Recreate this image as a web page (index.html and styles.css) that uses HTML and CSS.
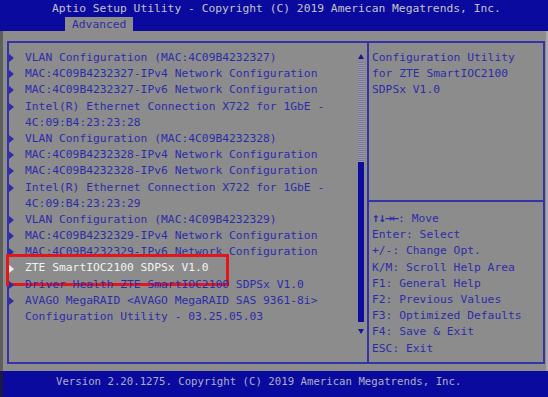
FILE: index.html
```html
<!DOCTYPE html>
<html lang="en">
  <head>
    <meta charset="UTF-8" />
    <meta name="viewport" content="width=device-width, initial-scale=1.0" />
    <title>Aptio Setup Utility</title>
    <link rel="stylesheet" href="styles.css">
  </head>
  <body>
    <div class="screen">
      <header class="top">
        <div class="title">Aptio Setup Utility - Copyright (C) 2019 American Megatrends, Inc.</div>
        <div class="tabs"><span class="tab">Advanced</span></div>
      </header>

      <main class="body">
        <div class="frame">
          <div class="menu-pane">
            <ul class="menu">
              <li class="item"><span class="arrow"></span>VLAN Configuration (MAC:4C09B4232327)</li>
              <li class="item"><span class="arrow"></span>MAC:4C09B4232327-IPv4 Network Configuration</li>
              <li class="item"><span class="arrow"></span>MAC:4C09B4232327-IPv6 Network Configuration</li>
              <li class="item"><span class="arrow"></span>Intel(R) Ethernet Connection X722 for 1GbE -</li>
              <li class="item cont">4C:09:B4:23:23:28</li>
              <li class="item"><span class="arrow"></span>VLAN Configuration (MAC:4C09B4232328)</li>
              <li class="item"><span class="arrow"></span>MAC:4C09B4232328-IPv4 Network Configuration</li>
              <li class="item"><span class="arrow"></span>MAC:4C09B4232328-IPv6 Network Configuration</li>
              <li class="item"><span class="arrow"></span>Intel(R) Ethernet Connection X722 for 1GbE -</li>
              <li class="item cont">4C:09:B4:23:23:29</li>
              <li class="item"><span class="arrow"></span>VLAN Configuration (MAC:4C09B4232329)</li>
              <li class="item"><span class="arrow"></span>MAC:4C09B4232329-IPv4 Network Configuration</li>
              <li class="item"><span class="arrow"></span>MAC:4C09B4232329-IPv6 Network Configuration</li>
              <li class="item selected"><span class="arrow"></span>ZTE SmartIOC2100 SDPSx V1.0</li>
              <li class="item"><span class="arrow"></span>Driver Health ZTE SmartIOC2100 SDPSx V1.0</li>
              <li class="item"><span class="arrow"></span>AVAGO MegaRAID &lt;AVAGO MegaRAID SAS 9361-8i&gt;</li>
              <li class="item cont">Configuration Utility - 03.25.05.03</li>
            </ul>
            <div class="scrollbar">
              <span class="sb-up"></span>
              <span class="sb-track"></span>
              <span class="sb-thumb"></span>
              <span class="sb-down"></span>
            </div>
          </div>

          <div class="help-pane">
            <div class="help-desc">
              <div>Configuration Utility</div>
              <div>for ZTE SmartIOC2100</div>
              <div>SDPSx V1.0</div>
            </div>
            <div class="help-keys">
              <div><b>&uarr;&darr;&rarr;&larr;</b>: Move</div>
              <div>Enter: Select</div>
              <div>+/-: Change Opt.</div>
              <div>K/M: Scroll Help Area</div>
              <div>F1: General Help</div>
              <div>F2: Previous Values</div>
              <div>F3: Optimized Defaults</div>
              <div>F4: Save &amp; Exit</div>
              <div>ESC: Exit</div>
            </div>
          </div>
        </div>
      </main>

      <footer class="bottom">Version 2.20.1275. Copyright (C) 2019 American Megatrends, Inc.</footer>
    </div>
  </body>
</html>
```

FILE: styles.css
```css
/* Basic Reset */
* {
  margin: 0;
  padding: 0;
  box-sizing: border-box;
}

body {
  background-color: #8c8c8c;
  font-family: "DejaVu Sans Mono", "Liberation Mono", monospace;
  font-size: 11.3px;
  color: #2c2caa;
}

.screen {
  width: 548px;
  height: 397px;
  display: flex;
  flex-direction: column;
  overflow: hidden;
}

/* Top bar */
.top {
  height: 31px;
  background-color: #0a0a9e;
  display: flex;
  flex-direction: column;
}

.title {
  height: 17px;
  line-height: 17px;
  padding-left: 52px;
  color: #c4c4cc;
  white-space: nowrap;
}

.tabs {
  height: 14px;
  padding-left: 65px;
}

.tab {
  display: inline-block;
  height: 14px;
  line-height: 15px;
  padding: 0 7px;
  background-color: #8c8c8c;
  color: #2c2caa;
}

/* Main area */
.body {
  flex: 1;
  padding: 10px 1px 7px 4px;
  border-left: 3px solid #5e5e5e;
  border-right: 2px solid #a8a8a8;
}

.frame {
  height: 100%;
  border: 2px solid #3434aa;
  display: flex;
}

.menu-pane {
  width: 360px;
  border-right: 2px solid #3434aa;
  display: flex;
}

.menu {
  flex: 1;
  list-style: none;
  padding-top: 7px;
}

.item {
  position: relative;
  display: flex;
  align-items: center;
  height: 16.2px;
  line-height: 16.2px;
  white-space: nowrap;
}

.item.cont {
  padding-left: 16px;
}

.arrow {
  width: 0;
  height: 0;
  border-top: 4px solid transparent;
  border-bottom: 4px solid transparent;
  border-left: 5px solid #2c2caa;
  margin-right: 11px;
}

.item.selected {
  color: #f2f2f2;
}

.item.selected .arrow {
  border-left-color: #f2f2f2;
}

/* red annotation box */
.item.selected::after {
  content: "";
  position: absolute;
  left: -3px;
  top: -6px;
  width: 217px;
  height: 26px;
  border: 3px solid #e3161e;
}

/* Scrollbar */
.scrollbar {
  width: 6px;
  margin-right: 3px;
  padding-top: 11px;
  display: flex;
  flex-direction: column;
  align-items: center;
}

.sb-up {
  width: 0;
  height: 0;
  border-left: 3px solid transparent;
  border-right: 3px solid transparent;
  border-bottom: 5px solid #1414a0;
}

.sb-track {
  width: 6px;
  height: 100px;
  margin-top: 3px;
  background: repeating-linear-gradient(#7676a6 0 1px, #9a9a9e 1px 2px);
}

.sb-thumb {
  width: 6px;
  height: 160px;
  background-color: #0c0ca0;
}

.sb-down {
  width: 0;
  height: 0;
  margin-top: 7px;
  border-left: 3px solid transparent;
  border-right: 3px solid transparent;
  border-top: 5px solid #1414a0;
}

/* Help pane */
.help-pane {
  flex: 1;
  display: flex;
  flex-direction: column;
}

.help-desc {
  height: 159px;
  padding: 7px 0 0 3px;
  line-height: 16.2px;
  border-bottom: 2px solid #3434aa;
}

.help-keys {
  padding: 8px 0 0 3px;
  line-height: 16.2px;
  white-space: nowrap;
}

.help-keys b {
  font-weight: bold;
  font-size: 12.5px;
  letter-spacing: -1px;
}

/* Footer */
.bottom {
  height: 26px;
  line-height: 21px;
  padding-left: 53px;
  background-color: #0a0a9e;
  border-left: 3px solid #1a1a40;
  color: #aeaec4;
  font-size: 10.7px;
  white-space: nowrap;
}
```
